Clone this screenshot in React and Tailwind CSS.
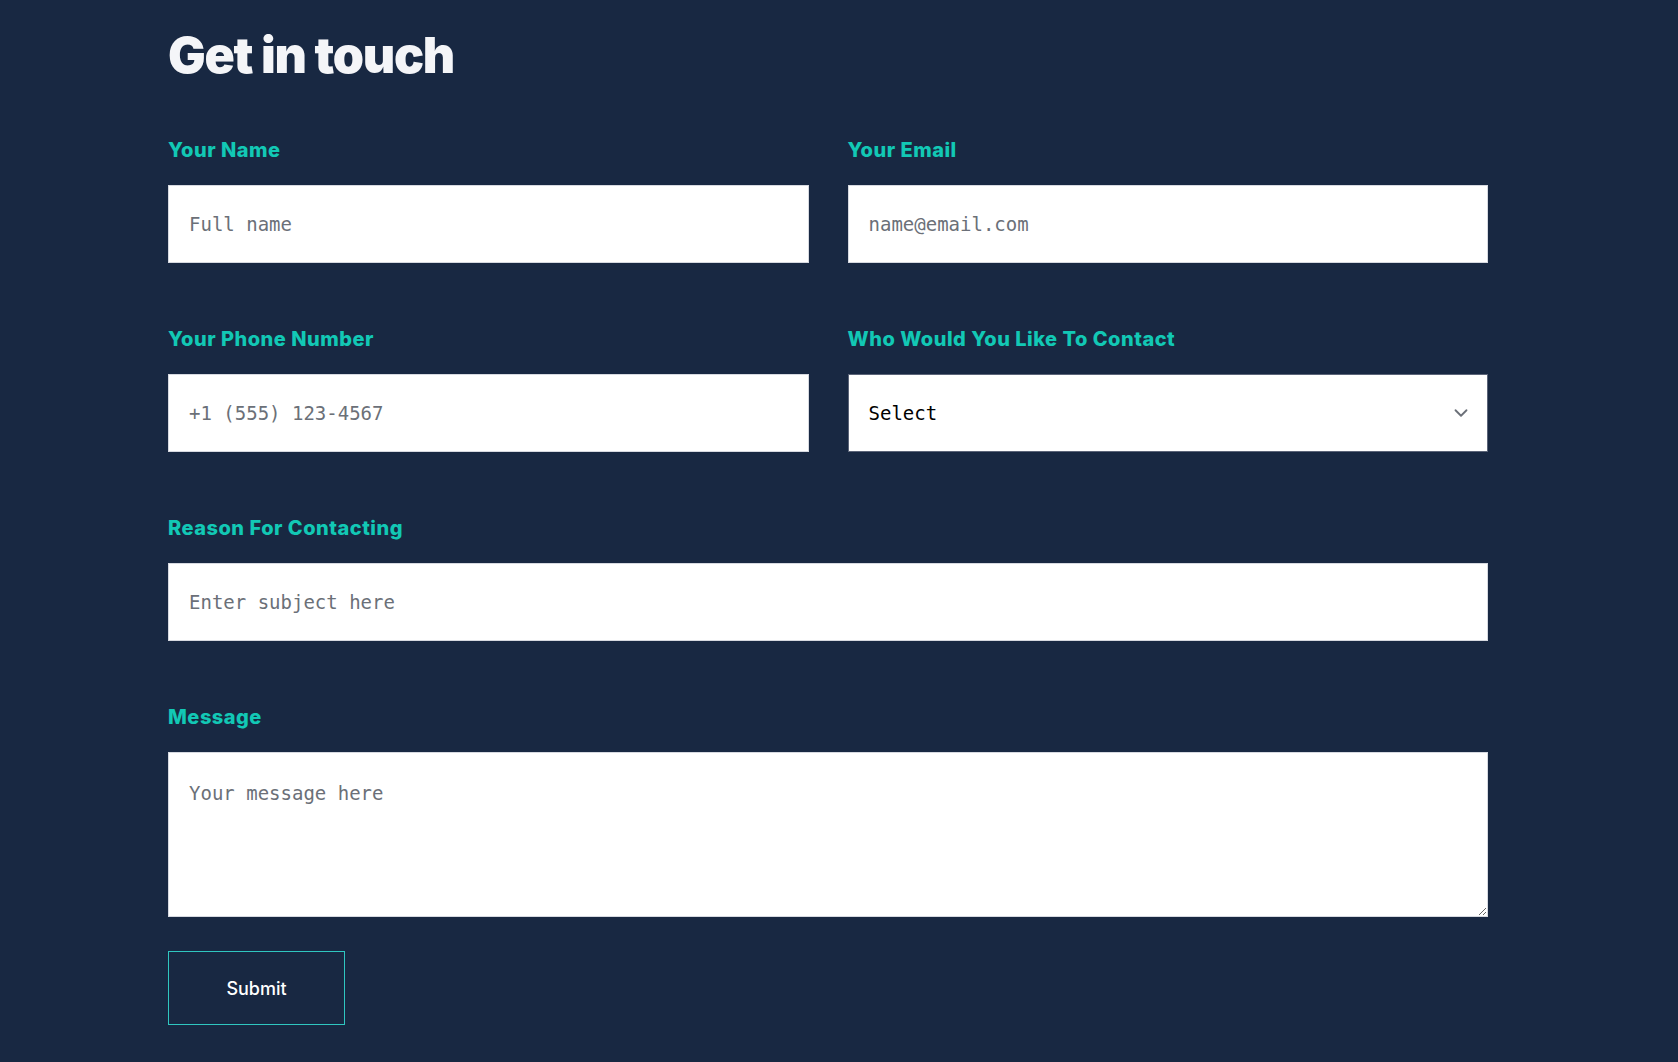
import React from "react";
import { ChevronDown } from "lucide-react";

const labelCls =
  "block text-[20px] leading-[28px] font-extrabold text-[#12c8b5] mb-[21px] tracking-[0.025em]";
const inputCls =
  "block w-full h-[78px] bg-white px-5 border border-[#d6d9e0] text-[19px] text-black placeholder:text-[#6b7078] outline-none";
const mono = { fontFamily: '"DejaVu Sans Mono", "Liberation Mono", monospace' };

function Field({ label, children, className = "" }) {
  return (
    <div className={className}>
      <label className={labelCls} style={{ fontFamily: "Inter, sans-serif" }}>
        {label}
      </label>
      {children}
    </div>
  );
}

export default function App() {
  return (
    <div className="min-h-screen bg-[#182842]" style={{ fontFamily: "Inter, sans-serif" }}>
      <div className="ml-[168px] w-[1320px] pt-[25px] pb-[37px]">
        <h1 className="text-[50px] leading-[60px] font-black text-[#f4f5f8] tracking-[-0.025em] mb-[51px]">
          Get in touch
        </h1>
        <form onSubmit={(e) => e.preventDefault()}>
          <div className="grid grid-cols-2 gap-x-[39px] gap-y-[62px]">
            <Field label="Your Name">
              <input className={inputCls} style={mono} placeholder="Full name" />
            </Field>
            <Field label="Your Email">
              <input className={inputCls} style={mono} placeholder="name@email.com" />
            </Field>
            <Field label="Your Phone Number">
              <input className={inputCls} style={mono} placeholder="+1 (555) 123-4567" />
            </Field>
            <Field label="Who Would You Like To Contact">
              <div className="relative">
                <select
                  className="block w-full h-[78px] bg-white px-5 border border-[#5b6478] text-[19px] text-black appearance-none outline-none"
                  style={mono}
                  defaultValue=""
                >
                  <option value="">Select</option>
                  <option>Sales</option>
                  <option>Support</option>
                </select>
                <ChevronDown
                  className="absolute right-[16px] top-1/2 -translate-y-1/2 pointer-events-none text-[#6b7078]"
                  size={22}
                  strokeWidth={2}
                />
              </div>
            </Field>
            <Field label="Reason For Contacting" className="col-span-2">
              <input className={inputCls} style={mono} placeholder="Enter subject here" />
            </Field>
            <Field label="Message" className="col-span-2">
              <textarea
                className="block w-full h-[165px] bg-white px-5 pt-[26px] border border-[#d6d9e0] text-[19px] leading-[28px] text-black placeholder:text-[#6b7078] outline-none"
                style={mono}
                placeholder="Your message here"
              />
            </Field>
          </div>
          <button
            type="submit"
            className="mt-[34px] w-[177px] h-[74px] border border-[#2fc6c0] text-white text-[18px] font-medium bg-transparent"
          >
            Submit
          </button>
        </form>
      </div>
    </div>
  );
}
